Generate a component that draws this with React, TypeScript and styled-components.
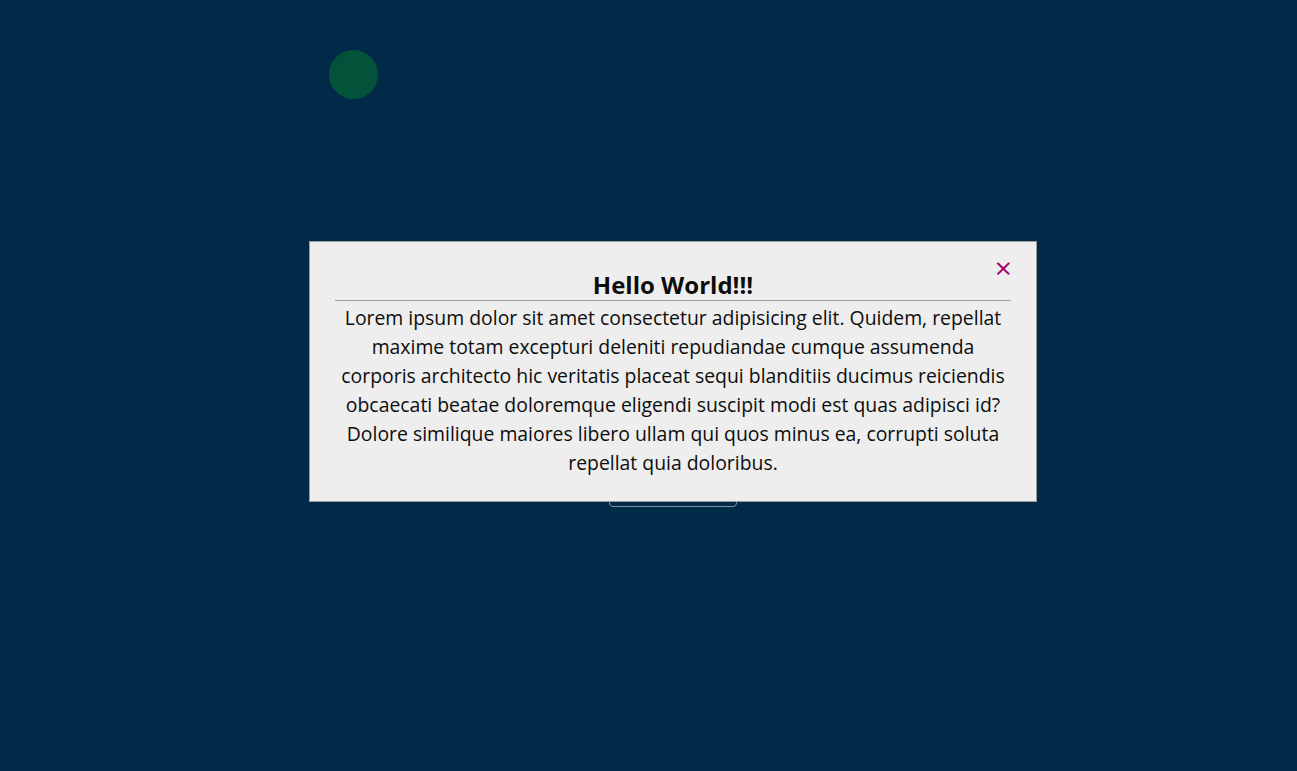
import React, { useState } from "react";
import styled, { createGlobalStyle } from "styled-components";

const GlobalStyle = createGlobalStyle`
  html, body {
    margin: 0;
    padding: 0;
    background: #002a48;
  }
  body {
    font-family: "Open Sans", "Liberation Sans", sans-serif;
  }
`;

const Screen = styled.div`
  position: relative;
  min-height: 100vh;
  box-sizing: border-box;
  padding: 50px 0 0 49px;
  background: #002a48;
  overflow: hidden;
`;

const Dot = styled.div`
  width: 49px;
  height: 49px;
  margin-left: 280px;
  border-radius: 50%;
  background: #03533a;
`;

const Trigger = styled.button`
  display: block;
  width: 128px;
  height: 40px;
  margin: 368px auto 0;
  background: transparent;
  border: 1px solid #7f8e9c;
  border-radius: 4px;
  color: #dfe6ec;
  font-family: inherit;
  font-size: 16px;
`;

const Overlay = styled.div`
  position: absolute;
  inset: 0;
  padding: 241px 0 0 49px;
  box-sizing: border-box;
`;

const Modal = styled.div`
  position: relative;
  width: 728px;
  margin: 0 auto;
  box-sizing: border-box;
  padding: 28px 25px 24px 25px;
  background: #eeeeee;
  border: 1px solid #9a9a9a;
  text-align: center;
  color: #0d0d0d;
`;

const Close = styled.button`
  position: absolute;
  top: 11px;
  right: 24px;
  padding: 0;
  border: none;
  background: none;
  color: #a3006b;
  font-family: inherit;
  font-size: 30px;
  font-weight: 400;
  line-height: 1;
  cursor: pointer;
`;

const Title = styled.h2`
  margin: 0;
  font-size: 24px;
  font-weight: 700;
  line-height: 30px;
  border-bottom: 1px solid #a0a0a0;
`;

const Body = styled.p`
  margin: 0;
  padding: 2px 4px 0;
  font-size: 19.4px;
  line-height: 29px;
`;

export default function App() {
  const [open, setOpen] = useState(true);
  return (
    <Screen>
      <GlobalStyle />
      <Dot />
      <Trigger onClick={() => setOpen(true)}>Open Modal</Trigger>
      {open && (
        <Overlay>
          <Modal>
            <Close onClick={() => setOpen(false)}>×</Close>
            <Title>Hello World!!!</Title>
            <Body>
              Lorem ipsum dolor sit amet consectetur adipisicing elit. Quidem,
              repellat maxime totam excepturi deleniti repudiandae cumque
              assumenda corporis architecto hic veritatis placeat sequi
              blanditiis ducimus reiciendis obcaecati beatae doloremque eligendi
              suscipit modi est quas adipisci id? Dolore similique maiores
              libero ullam qui quos minus ea, corrupti soluta repellat quia
              doloribus.
            </Body>
          </Modal>
        </Overlay>
      )}
    </Screen>
  );
}
